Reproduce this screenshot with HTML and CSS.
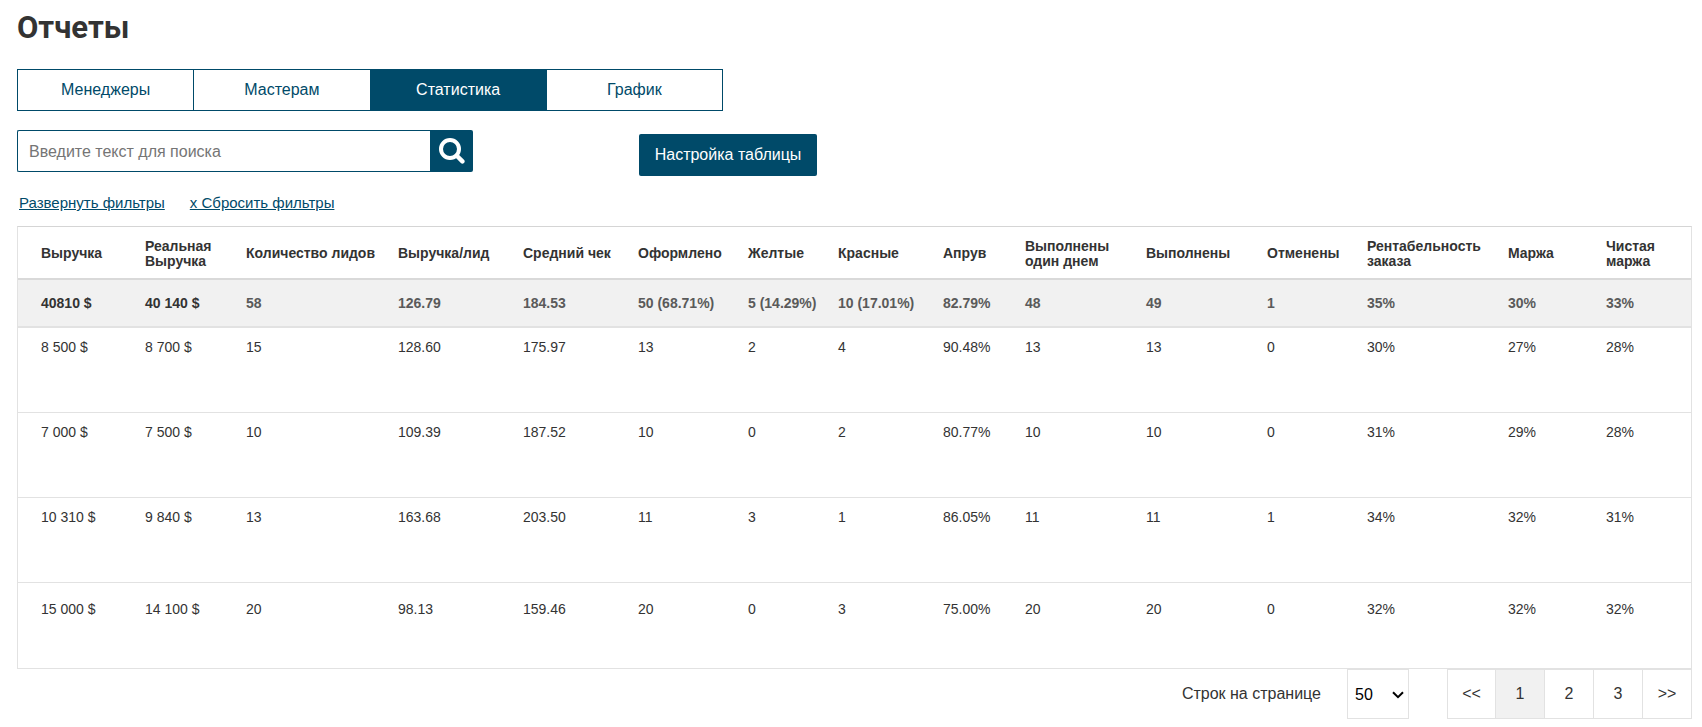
FILE: index.html
```html
<!DOCTYPE html>
<html lang="ru">
<head>
    <meta charset="UTF-8">
    <meta name="viewport" content="width=device-width, initial-scale=1.0">
    <title>Отчеты</title>
    <link rel="stylesheet" href="styles.css">
</head>
<body>
    <main class="page">
        <h1 class="title">Отчеты</h1>

        <nav class="tabs">
            <a class="tab" href="#managers">Менеджеры</a>
            <a class="tab" href="#masters">Мастерам</a>
            <a class="tab active" href="#stats">Статистика</a>
            <a class="tab" href="#chart">График</a>
        </nav>

        <div class="toolbar">
            <form class="search">
                <input class="search-input" type="text" placeholder="Введите текст для поиска" aria-label="Введите текст для поиска">
                <button class="search-btn" type="button" aria-label="Поиск">
                    <svg width="26" height="26" viewBox="0 0 26 26" fill="none" stroke="#fff" stroke-linecap="round">
                        <circle cx="11" cy="11" r="9" stroke-width="4"/>
                        <path d="M17.8 17.8L23.4 23.4" stroke-width="4.4"/>
                    </svg>
                </button>
            </form>
            <button class="settings-btn" type="button">Настройка таблицы</button>
        </div>

        <div class="filters">
            <a href="#filters">Развернуть фильтры</a>
            <a href="#reset">x Сбросить фильтры</a>
        </div>

        <div class="table-wrap">
            <table class="report">
                <colgroup>
                    <col class="w-109"><col class="w-101"><col class="w-152"><col class="w-125"><col class="w-115">
                    <col class="w-110"><col class="w-90"><col class="w-105"><col class="w-82"><col class="w-121">
                    <col class="w-121"><col class="w-100"><col class="w-141"><col class="w-98"><col class="w-103">
                </colgroup>
                <thead>
                    <tr>
                        <th>Выручка</th>
                        <th>Реальная Выручка</th>
                        <th>Количество лидов</th>
                        <th>Выручка/лид</th>
                        <th>Средний чек</th>
                        <th>Оформлено</th>
                        <th>Желтые</th>
                        <th>Красные</th>
                        <th>Апрув</th>
                        <th>Выполнены один днем</th>
                        <th>Выполнены</th>
                        <th>Отменены</th>
                        <th>Рентабельность заказа</th>
                        <th>Маржа</th>
                        <th>Чистая маржа</th>
                    </tr>
                </thead>
                <tbody>
                    <tr class="total">
                        <td class="money">40810 $</td>
                        <td class="money">40 140 $</td>
                        <td>58</td>
                        <td>126.79</td>
                        <td>184.53</td>
                        <td>50 (68.71%)</td>
                        <td>5 (14.29%)</td>
                        <td>10 (17.01%)</td>
                        <td>82.79%</td>
                        <td>48</td>
                        <td>49</td>
                        <td>1</td>
                        <td>35%</td>
                        <td>30%</td>
                        <td>33%</td>
                    </tr>
                    <tr>
                        <td>8 500 $</td>
                        <td>8 700 $</td>
                        <td>15</td>
                        <td>128.60</td>
                        <td>175.97</td>
                        <td>13</td>
                        <td>2</td>
                        <td>4</td>
                        <td>90.48%</td>
                        <td>13</td>
                        <td>13</td>
                        <td>0</td>
                        <td>30%</td>
                        <td>27%</td>
                        <td>28%</td>
                    </tr>
                    <tr>
                        <td>7 000 $</td>
                        <td>7 500 $</td>
                        <td>10</td>
                        <td>109.39</td>
                        <td>187.52</td>
                        <td>10</td>
                        <td>0</td>
                        <td>2</td>
                        <td>80.77%</td>
                        <td>10</td>
                        <td>10</td>
                        <td>0</td>
                        <td>31%</td>
                        <td>29%</td>
                        <td>28%</td>
                    </tr>
                    <tr>
                        <td>10 310 $</td>
                        <td>9 840 $</td>
                        <td>13</td>
                        <td>163.68</td>
                        <td>203.50</td>
                        <td>11</td>
                        <td>3</td>
                        <td>1</td>
                        <td>86.05%</td>
                        <td>11</td>
                        <td>11</td>
                        <td>1</td>
                        <td>34%</td>
                        <td>32%</td>
                        <td>31%</td>
                    </tr>
                    <tr class="last">
                        <td>15 000 $</td>
                        <td>14 100 $</td>
                        <td>20</td>
                        <td>98.13</td>
                        <td>159.46</td>
                        <td>20</td>
                        <td>0</td>
                        <td>3</td>
                        <td>75.00%</td>
                        <td>20</td>
                        <td>20</td>
                        <td>0</td>
                        <td>32%</td>
                        <td>32%</td>
                        <td>32%</td>
                    </tr>
                </tbody>
            </table>
        </div>

        <div class="footer">
            <label class="rows-label" for="rows">Строк на странице</label>
            <div class="select-wrap">
                <select class="rows-select" id="rows">
                    <option>50</option>
                    <option>100</option>
                </select>
                <svg class="select-arrow" width="12" height="8" viewBox="0 0 12 8" fill="none" stroke="#000" stroke-width="2">
                    <path d="M1 1.2L6 6.2L11 1.2"/>
                </svg>
            </div>
            <nav class="pages">
                <a class="page-link" href="#prev">&lt;&lt;</a>
                <a class="page-link current" href="#1">1</a>
                <a class="page-link" href="#2">2</a>
                <a class="page-link" href="#3">3</a>
                <a class="page-link" href="#next">&gt;&gt;</a>
            </nav>
        </div>
    </main>
</body>
</html>
```
FILE: styles.css
```css
* {
    box-sizing: border-box;
}
body {
    margin: 0;
    background: #fff;
    color: #333;
    font-family: "Liberation Sans", Arial, sans-serif;
    font-size: 16px;
}
.page {
    padding: 8px 10px 8px 17px;
}
.title {
    margin: 0 0 21px;
    font-family: Roboto, "Noto Sans", sans-serif;
    font-size: 31px;
    line-height: 40px;
}
.tabs {
    display: flex;
    max-width: 706px;
    border: 1px solid #004a69;
}
.tab {
    flex: 1;
    height: 40px;
    line-height: 40px;
    text-align: center;
    color: #004a69;
    text-decoration: none;
}
.tab + .tab {
    border-left: 1px solid #004a69;
}
.tab.active {
    background: #004a69;
    color: #fff;
}
.toolbar {
    display: flex;
    align-items: flex-end;
    gap: 166px;
    margin-top: 19px;
}
.search {
    display: flex;
    width: 456px;
    height: 42px;
    margin-bottom: 4px;
}
.search-input {
    flex: 1;
    min-width: 0;
    padding: 2px 11px 0;
    border: 1px solid #004a69;
    border-right: 0;
    border-radius: 2px 0 0 2px;
    font: inherit;
    color: #333;
}
.search-input::placeholder {
    color: #757575;
}
.search-btn {
    display: flex;
    align-items: center;
    justify-content: center;
    width: 43px;
    padding: 0;
    border: 0;
    border-radius: 0 2px 2px 0;
    background: #004a69;
}
.settings-btn {
    min-width: 178px;
    height: 42px;
    padding: 0 14px;
    border: 0;
    border-radius: 2px;
    background: #004a69;
    color: #fff;
    font: inherit;
}
.filters {
    display: flex;
    gap: 25px;
    padding: 18px 2px 14px;
    font-size: 15px;
    line-height: 18px;
}
.filters a {
    color: #004a69;
}
.table-wrap {
    overflow-x: auto;
}
.report {
    width: 100%;
    table-layout: fixed;
    border: 1px solid #e2e2e2;
    border-top-color: #d5d5d5;
    border-spacing: 0;
    font-size: 14px;
    line-height: 15px;
}
.report th {
    height: 53px;
    padding: 2px 0 0 18px;
    border-bottom: 2px solid #d9d9d9;
    text-align: left;
}
.report td {
    height: 85px;
    padding: 12px 0 0 18px;
    border-bottom: 1px solid #e2e2e2;
    vertical-align: top;
}
.report th:first-child,
.report td:first-child {
    padding-left: 23px;
}
.report .total td {
    height: 48px;
    padding-top: 0;
    border-bottom-width: 2px;
    background: #f1f1f1;
    color: #5a5a5a;
    font-weight: bold;
    vertical-align: middle;
}
.report .total .money {
    color: #333;
}
.report .last td {
    padding-top: 19px;
    border-bottom: 0;
}
.w-82 { width: 82px; }
.w-90 { width: 90px; }
.w-98 { width: 98px; }
.w-100 { width: 100px; }
.w-101 { width: 101px; }
.w-103 { width: 103px; }
.w-105 { width: 105px; }
.w-109 { width: 109px; }
.w-110 { width: 110px; }
.w-115 { width: 115px; }
.w-121 { width: 121px; }
.w-125 { width: 125px; }
.w-141 { width: 141px; }
.w-152 { width: 152px; }
.footer {
    display: flex;
    justify-content: flex-end;
    align-items: center;
}
.rows-label {
    margin-right: 26px;
}
.select-wrap {
    position: relative;
    margin-right: 38px;
}
.rows-select {
    display: block;
    width: 62px;
    height: 50px;
    padding: 0 7px;
    border: 1px solid #e2e2e2;
    border-radius: 0;
    background: #fff;
    color: #000;
    font: inherit;
    appearance: none;
}
.select-arrow {
    position: absolute;
    top: 22px;
    right: 5px;
    pointer-events: none;
}
.pages {
    display: flex;
}
.page-link {
    width: 49px;
    height: 50px;
    border: 1px solid #e2e2e2;
    border-left: 0;
    line-height: 48px;
    text-align: center;
    color: #333;
    text-decoration: none;
}
.page-link:first-child {
    border-left: 1px solid #e2e2e2;
}
.page-link.current {
    background: #f1f1f1;
}
```
